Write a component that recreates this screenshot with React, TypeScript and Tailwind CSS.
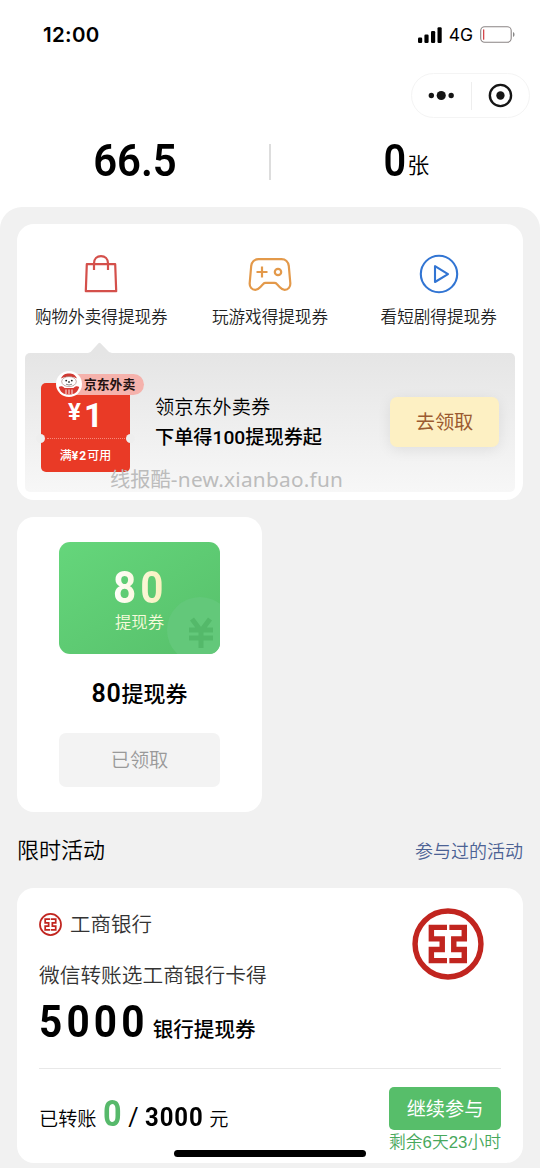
import React from "react";

const IcbcLogo = ({ className }: { className: string }) => (
  <svg viewBox="0 0 212 212" className={className} fill="none" stroke="#c1251f">
    <circle cx="106" cy="106" r="97" strokeWidth="16" />
    <path
      d="M103 57H57V91H89V122H57V155H103M110 57H154V91H123V122H154V155H110"
      strokeWidth="16"
    />
  </svg>
);

const BagIcon = () => (
  <svg width="40" height="40" viewBox="0 0 40 40" fill="none" stroke="#d4504b" strokeWidth="2.2" strokeLinejoin="round">
    <path d="M5.8 10.2H34.2L35.2 37.2H4.8Z" />
    <path d="M13 16V9.5C13 4.8 16 2.2 20 2.2S27 4.8 27 9.5V16" />
  </svg>
);

const GamepadIcon = () => (
  <svg width="46" height="40" viewBox="0 0 46 40" fill="none" stroke="#e3994a" strokeWidth="2.2" strokeLinejoin="round">
    <path d="M11.5 5.2H34.5C38.5 5.2 41.3 8 41.8 12L43.3 29C43.6 33 41.2 35.8 37.7 35.8C35.3 35.8 34.2 34.8 32.6 33L29.6 29.8C29 29.1 28.4 28.9 27.5 28.9H18.5C17.6 28.9 17 29.1 16.4 29.8L13.4 33C11.8 34.8 10.7 35.8 8.3 35.8C4.8 35.8 2.4 33 2.7 29L4.2 12C4.7 8 7.5 5.2 11.5 5.2Z" />
    <path d="M15 12.5V23.5M9.5 18H20.5" />
    <circle cx="31" cy="18" r="3.2" />
  </svg>
);

const PlayIcon = () => (
  <svg width="40" height="40" viewBox="0 0 40 40" fill="none" stroke="#3275d3" strokeWidth="2.1">
    <circle cx="20" cy="20" r="18.2" />
    <path d="M16 12.2V28L29 20.1Z" strokeLinejoin="round" />
  </svg>
);

const Mascot = () => (
  <svg width="26" height="26" viewBox="0 0 26 26">
    <circle cx="13" cy="13" r="13" fill="#fff" />
    <path d="M5 7.5C6.5 3.6 9.5 2.4 13 2.4S19.5 3.6 21 7.5L18 6.3H8Z" fill="#cf3b34" />
    <ellipse cx="13" cy="10.6" rx="7.3" ry="5" fill="#fff" stroke="#8c5a55" strokeWidth="0.5" />
    <path d="M2.8 16C4.5 14.6 7 15 8.5 17H17.5C19 15 21.5 14.6 23.2 16C22 20.5 19 23.6 13 23.6S4 20.5 2.8 16Z" fill="#d93a32" />
    <circle cx="10.2" cy="9.6" r="0.9" fill="#222" />
    <circle cx="15.8" cy="9.6" r="0.9" fill="#222" />
    <ellipse cx="13" cy="11" rx="1.1" ry="0.8" fill="#222" />
    <path d="M10 13.2Q13 14.8 16 13.2" fill="none" stroke="#555" strokeWidth="0.7" />
    <path d="M10 18.5V23M13 18.5V23M16 18.5V23" stroke="#fff" strokeWidth="0.9" />
  </svg>
);

const StatusBar = () => (
  <div className="flex h-[68px] items-center justify-between pt-px pr-[24px] pl-[43px]">
    <span className="font-['Inter',sans-serif] text-[20.5px] leading-6 font-semibold tracking-[0.3px]">12:00</span>
    <div className="flex items-center">
      <svg width="24" height="16" viewBox="0 0 24 16" fill="#000">
        <rect x="0" y="10.5" width="4.2" height="5.5" rx="1.2" />
        <rect x="6.4" y="7.5" width="4.2" height="8.5" rx="1.2" />
        <rect x="13" y="4" width="4.2" height="12" rx="1.2" />
        <rect x="19.5" y="0.2" width="4.2" height="15.8" rx="1.2" />
      </svg>
      <span className="ml-[7px] font-['Inter',sans-serif] text-[17.5px] leading-6">4G</span>
      <svg className="ml-[7px]" width="36" height="17" viewBox="0 0 36 17" fill="none">
        <rect x="0.7" y="0.7" width="30.5" height="15.6" rx="4" stroke="#8b8585" strokeWidth="1.1" />
        <rect x="3" y="3.2" width="1.3" height="10.6" rx="0.6" fill="#d4484c" />
        <path d="M33 6V11C34 10.5 34.5 9.5 34.5 8.5S34 6.5 33 6Z" fill="#888" />
      </svg>
    </div>
  </div>
);

const entries = [
  { label: "购物外卖得提现券", icon: <BagIcon /> },
  { label: "玩游戏得提现券", icon: <GamepadIcon /> },
  { label: "看短剧得提现券", icon: <PlayIcon /> },
];

const Ticket = () => (
  <div className="relative mt-[30px] ml-4 flex h-[89px] w-[89px] flex-col items-center rounded-[5px] bg-[#e93a26] text-white">
    <div className="mt-[14px] flex h-[36px] items-start font-['Roboto',sans-serif] font-bold">
      <span className="text-[24px] leading-[30px]">¥</span>
      <span className="ml-[3px] text-[33px] leading-[38px]">1</span>
    </div>
    <div className="mt-[5px] w-[78px] border-t border-dotted border-[#f58a7c]" />
    <div className="mt-[7px] text-[12px] leading-[18px] font-medium whitespace-nowrap">
      满<span className="font-['Roboto',sans-serif] font-bold tracking-[1px]">¥2</span>可用
    </div>
    <span className="absolute top-[51px] -left-[5px] h-[9px] w-[9px] rounded-full bg-[#eeeeee]" />
    <span className="absolute top-[51px] -right-[5px] h-[9px] w-[9px] rounded-full bg-[#eeeeee]" />
    <div className="absolute -top-[9px] left-[16px] flex h-[21px] w-[87px] items-center rounded-full bg-[#f5b2ac] pl-[27px]">
      <span className="absolute -top-[3px] -left-px">
        <Mascot />
      </span>
      <span className="text-[12.8px] leading-none font-bold whitespace-nowrap text-[#221111]">京东外卖</span>
    </div>
  </div>
);

const ChannelCard = () => (
  <section className="relative h-[276px] rounded-[17px] bg-white px-2 pt-[30px]">
    <div className="-mx-2 grid grid-cols-3">
      {entries.map((e) => (
        <div key={e.label} className="flex flex-col items-center">
          {e.icon}
          <span className="mt-[10px] text-[16.6px] leading-6 font-[350] text-[#222]">{e.label}</span>
        </div>
      ))}
    </div>
    <svg className="mt-[14px] ml-[63px] block" width="24" height="11" viewBox="0 0 24 11">
      <path d="M0 11C2 10.5 2.5 10 3.5 9L10.5 1.2Q11.5 0.2 12.5 1.2L20 9C21 10 22 10.5 24 11Z" fill="#e5e5e5" />
    </svg>
    <div className="-mt-[0.5px] flex h-[139.5px] rounded-[5px] bg-linear-to-b from-[#e5e5e5] to-[#f7f7f7]">
      <Ticket />
      <div className="mt-[38px] ml-[25px] flex-1 text-[19.2px] leading-[30.5px] whitespace-nowrap">
        <div className="font-[350]">领京东外卖券</div>
        <div className="font-medium">
          下单得<span className="font-['Roboto',sans-serif]">100</span>提现券起
        </div>
      </div>
      <button className="mt-[44px] mr-4 h-[50px] w-[109px] rounded-[7px] bg-[#fdf0c3] text-[19.2px] text-[#9b5a30] shadow-[0_3px_14px_rgba(0,0,0,0.08)]">
        去领取
      </button>
    </div>
    <span className="absolute top-[240px] left-[93px] text-[20.3px] leading-[28px] whitespace-nowrap text-[#bcbcbc]">
      线报酷<span className="font-['Noto_Sans',sans-serif] text-[20.8px] tracking-[0.25px]">-new.xianbao.fun</span>
    </span>
  </section>
);

const CouponCard = () => (
  <section className="mt-[17px] flex h-[295px] w-[245px] flex-col items-center rounded-[17px] bg-white pt-[25px]">
    <div className="relative flex h-[112px] w-[161px] flex-col items-center overflow-hidden rounded-[11px] bg-linear-to-br from-[#65d67b] to-[#57c06b]">
      <span className="absolute top-[55px] left-[108px] h-[66px] w-[66px] rounded-full bg-[#63c87a]" />
      <svg className="absolute top-[74px] left-[128px]" width="28" height="34" viewBox="0 0 28 34" fill="none" stroke="#54b96a" strokeWidth="5">
        <path d="M5 3L14 15L23 3M2 14H26M2 22H26M14 14V32" />
      </svg>
      <span className="relative mt-[27px] scale-x-90 bg-linear-to-r from-white to-[#f8efb5] bg-clip-text pl-[2px] font-['Roboto',sans-serif] text-[45px] leading-[38px] font-bold tracking-[4.5px] text-transparent">
        80
      </span>
      <span className="relative mt-[3px] text-[16.4px] leading-[22px] font-[350] text-[#f7fbdc]">提现券</span>
    </div>
    <div className="mt-[22px] flex h-8 items-center text-[22px] leading-8 font-medium">
      <span className="mt-[3px] font-['Roboto',sans-serif] text-[25px] leading-8 font-semibold tracking-[0.8px]">80</span>
      提现券
    </div>
    <button className="mt-[25px] h-[54px] w-[161px] rounded-[7px] bg-[#f3f3f3] pb-[2px] text-[19.2px] font-[350] text-[#999]">已领取</button>
  </section>
);

const BankCard = () => (
  <section className="mt-[20px] h-[275px] rounded-[17px] bg-white px-[22px]">
    <div className="flex h-[181px] justify-between border-b border-[#e8e8e8]">
      <div className="pt-[21px]">
        <div className="flex h-[30px] items-center text-[20.5px] font-[350] text-[#333]">
          <IcbcLogo className="mr-[8px] h-[23px] w-[23px]" />
          <span className="-mt-[2px]">工商银行</span>
        </div>
        <div className="mt-[20px] text-[20.7px] leading-[30px] font-[350] text-[#333]">微信转账选工商银行卡得</div>
        <div className="mt-[8px] flex h-[50px] items-baseline">
          <span className="mr-[-12px] origin-left scale-x-90 font-['Roboto',sans-serif] text-[45px] leading-[50px] font-bold tracking-[4.6px]">5000</span>
          <span className="ml-[4px] text-[20.6px] leading-[40px] font-medium">银行提现券</span>
        </div>
      </div>
      <IcbcLogo className="mt-[20px] mr-[17px] h-[72px] w-[72px]" />
    </div>
    <div className="flex justify-between pt-[18px]">
      <div className="flex h-[54px] items-baseline text-[19.2px] leading-[55px]">
        <span className="font-[350]">已转账</span>
        <span className="ml-[5px] scale-x-90 font-['Roboto',sans-serif] text-[36px] font-bold text-[#57b96b]">0</span>
        <span className="ml-[6px] font-['Roboto',sans-serif] text-[25px]">/</span>
        <span className="ml-[6px] origin-left scale-x-[0.92] font-['Roboto',sans-serif] text-[26px] font-bold tracking-[1px]">3000</span>
        <span className="ml-px font-[350]">元</span>
      </div>
      <div className="flex w-[112px] flex-col items-center">
        <button className="h-[43px] w-full rounded-[5px] bg-[#57be6a] text-[19.2px] text-white">继续参与</button>
        <span className="font-['Liberation_Sans','Noto_Sans_CJK_SC',sans-serif] text-[16.8px] leading-[26px] font-[350] whitespace-nowrap text-[#48a85c]">
          剩余6天23小时
        </span>
      </div>
    </div>
  </section>
);

export default function App() {
  return (
    <div className="relative h-[1168px] w-[540px] overflow-hidden bg-white font-['Noto_Sans_CJK_SC',sans-serif] text-black">
      <StatusBar />
      <div className="flex h-[50px] justify-end pt-[5px] pr-[10px]">
        <div className="flex h-[45px] w-[119px] items-center rounded-full border border-[#f4f4f4]">
          <svg width="59" height="28" viewBox="0 0 59 28" fill="#151515">
            <circle cx="19.5" cy="13.5" r="2.7" />
            <circle cx="29.5" cy="13.5" r="4.6" />
            <circle cx="39.5" cy="13.5" r="2.7" />
          </svg>
          <span className="h-7 w-px bg-[#eeeeee]" />
          <svg width="58" height="28" viewBox="0 0 58 28" fill="#151515">
            <circle cx="29.7" cy="13.5" r="10.7" fill="none" stroke="#151515" strokeWidth="2.4" />
            <circle cx="29.7" cy="13.5" r="4.2" />
          </svg>
        </div>
      </div>
      <div className="flex h-[89px] items-start pt-[25px]">
        <div className="flex w-[269px] justify-center">
          <span className="scale-x-[0.93] font-['Roboto',sans-serif] text-[45px] leading-[36px] font-semibold">66.5</span>
        </div>
        <span className="mt-px h-[36px] w-[2px] bg-[#dddddd]" />
        <div className="flex w-[269px] justify-center">
          <span className="scale-x-[0.88] font-['Roboto',sans-serif] text-[45px] leading-[36px] font-semibold">0</span>
          <span className="mt-[5px] text-[22px] leading-[30px] font-[350]">张</span>
        </div>
      </div>
      <main className="h-[961px] rounded-t-[22px] bg-[#f1f1f1] px-[17px] pt-[17px]">
        <ChannelCard />
        <CouponCard />
        <div className="mt-[20px] flex h-[36px] items-center justify-between">
          <h2 className="pb-[3px] text-[22px] font-[350]">限时活动</h2>
          <a className="text-[18px] font-[350] text-[#4c6294]">参与过的活动</a>
        </div>
        <BankCard />
      </main>
      <div className="absolute top-[1150px] left-[174px] h-[7px] w-[192px] rounded-full bg-black" />
    </div>
  );
}
